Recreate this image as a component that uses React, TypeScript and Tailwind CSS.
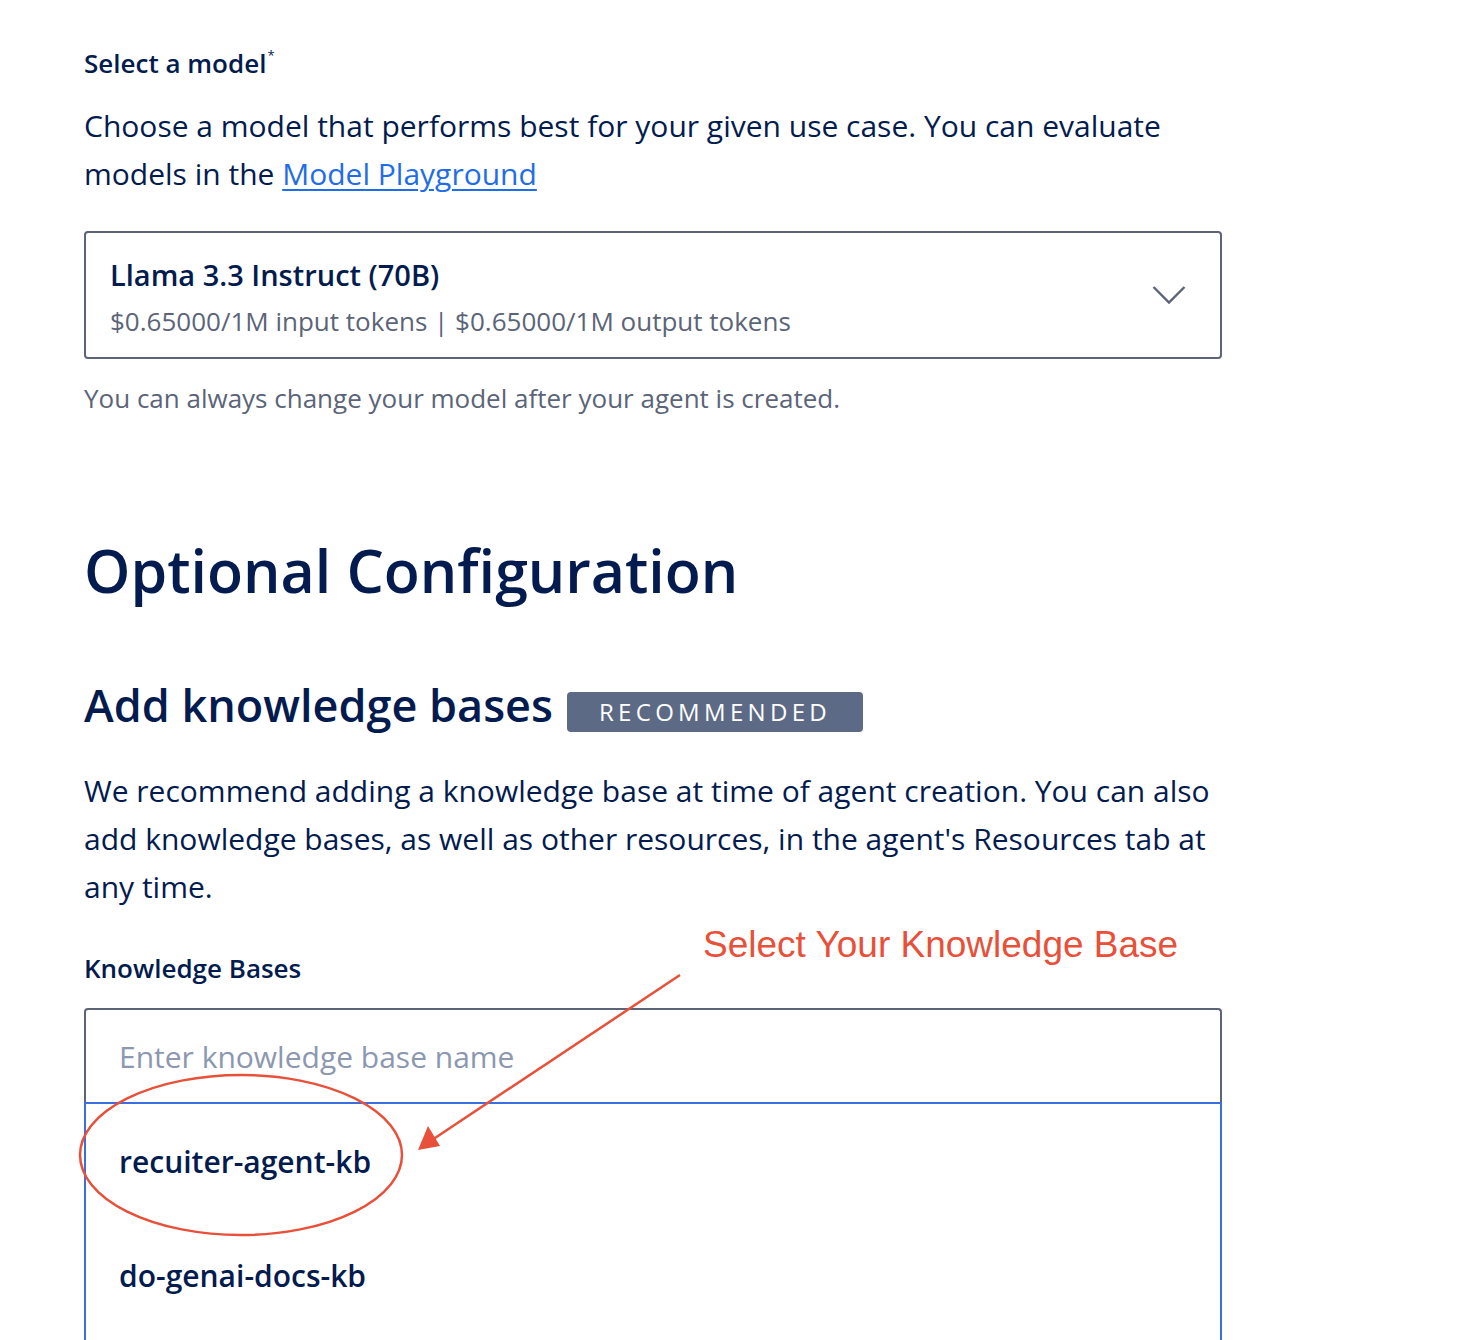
const font = { fontFamily: '"Open Sans", Lato, sans-serif' };

export default function App() {
  return (
    <div className="relative min-h-[1340px] w-full overflow-hidden bg-white text-[#031b4e]" style={font}>
      <div className="w-[1138px] ml-[84px] pt-[46px]">
        {/* Model section */}
        <label className="block h-[34px] text-[26px] font-semibold leading-[34px]">
          Select a model<span className="text-[13px] font-normal leading-none relative -top-[13px] ml-[1px]">*</span>
        </label>
        <p className="mt-[22px] text-[30px] leading-[48px]">
          Choose a model that performs best for your given use case. You can evaluate models in the{' '}
          <a href="#" className="text-[#1f6de8] underline underline-offset-[4px] decoration-[2px]">Model Playground</a>
        </p>

        <button className="mt-[33px] w-full h-[128px] flex items-center justify-between rounded-[4px] border-2 border-[#5b6478] pl-[24px] pr-[34px] text-left">
          <div className="flex flex-col gap-[12px] pt-[4px]">
            <span className="text-[29px] font-semibold leading-[36px]">Llama 3.3 Instruct (70B)</span>
            <span className="text-[26px] leading-[32px] text-[#5b6478]">
              $0.65000/1M input tokens | $0.65000/1M output tokens
            </span>
          </div>
          <svg width="34" height="20" viewBox="0 0 34 20" className="text-[#5b6478]">
            <polyline points="1.5,2 17,17.5 32.5,2" fill="none" stroke="currentColor" strokeWidth="2.4" />
          </svg>
        </button>
        <p className="mt-[23px] text-[26px] leading-[32px] text-[#5b6478]">
          You can always change your model after your agent is created.
        </p>

        {/* Optional configuration */}
        <h1 className="mt-[120px] text-[59px] font-semibold leading-[72px]">Optional Configuration</h1>

        <div className="mt-[71px] flex items-center gap-[14px]">
          <h2 className="text-[45px] font-semibold leading-[56px]">Add knowledge bases</h2>
          <span className="mt-[14px] h-[40px] px-[32px] flex items-center rounded-[4px] bg-[#5d6a85] text-white text-[24px] tracking-[0.18em] leading-none">
            RECOMMENDED
          </span>
        </div>

        <p className="mt-[34px] text-[30px] leading-[48px]">
          We recommend adding a knowledge base at time of agent creation. You can also add knowledge bases, as well as other resources, in the agent's Resources tab at any time.
        </p>

        <label className="block mt-[41px] text-[26px] font-semibold leading-[32px]">Knowledge Bases</label>

        <div className="mt-[24px] h-[94px] flex items-center rounded-t-[4px] border-2 border-b-0 border-[#5b6478] px-[33px]">
          <span className="text-[30px] text-[#8c97b0]">Enter knowledge base name</span>
        </div>
        <ul className="h-[300px] border-2 border-[#3b6ee0] border-b-0">
          <li className="h-[114px] flex items-center px-[33px] text-[30px] font-semibold">recuiter-agent-kb</li>
          <li className="h-[114px] flex items-center px-[33px] text-[30px] font-semibold">do-genai-docs-kb</li>
        </ul>
      </div>

      {/* Annotation overlay */}
      <span
        className="absolute left-[703px] top-[921px] text-[37px] leading-[48px] text-[#e8503a]"
        style={{ fontFamily: '"Liberation Sans", Arial, sans-serif' }}
      >
        Select Your Knowledge Base
      </span>
      <svg className="absolute left-0 top-0 pointer-events-none" width="1466" height="1340" viewBox="0 0 1466 1340">
        <ellipse cx="241" cy="1155" rx="161" ry="80" fill="none" stroke="#e8503a" strokeWidth="2.5" />
        <line x1="680" y1="975" x2="432" y2="1140" stroke="#e8503a" strokeWidth="2.5" />
        <polygon points="418,1150 428,1126 440,1146" fill="#e8503a" />
      </svg>
    </div>
  );
}
